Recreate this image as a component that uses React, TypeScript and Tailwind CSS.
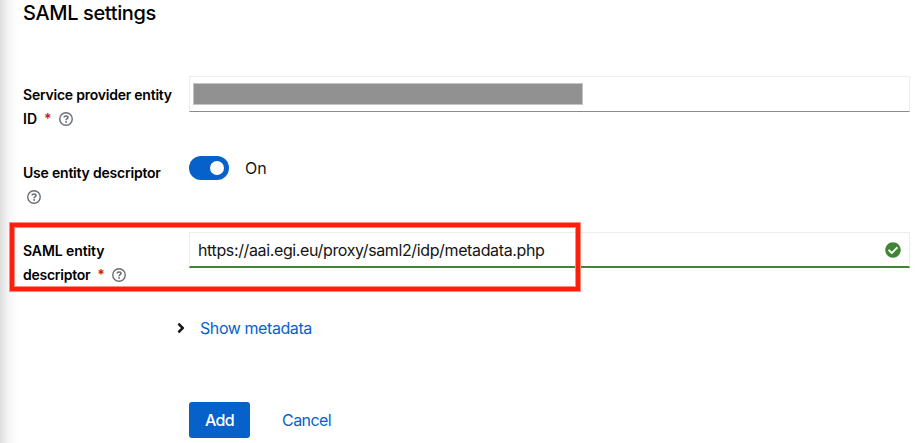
import type { ReactNode } from "react";
import { FaAngleRight, FaCheckCircle } from "react-icons/fa";

function Required() {
  return <span className="ml-[7px] w-[6px] text-[14px] text-[#c9190b]">*</span>;
}

function Help({ className }: { className: string }) {
  return (
    <button type="button" aria-label="Help" className={`text-[#6a6e73] ${className}`}>
      <svg width="14" height="14" viewBox="0 0 14 14" fill="none" stroke="currentColor" className="block">
        <circle cx="7" cy="7" r="6.25" strokeWidth="1.4" />
        <path d="M5 5.5C5.1 4.5 5.9 3.9 7 3.9C8.2 3.9 9 4.6 9 5.5C9 6.7 7.1 6.7 7.1 8.2" strokeWidth="1.5" />
        <circle cx="7.1" cy="9.9" r="0.95" fill="currentColor" stroke="none" />
      </svg>
    </button>
  );
}

function Row({ label, children }: { label: ReactNode; children: ReactNode }) {
  return (
    <div className="flex h-[78px] items-start">
      <div className="w-[166px] shrink-0 pt-[7px] text-[14px] leading-6 font-semibold whitespace-nowrap text-black">{label}</div>
      <div className="w-[721px] shrink-0">{children}</div>
    </div>
  );
}

export default function App() {
  return (
    <main className="relative flex h-[443px] w-[923px] overflow-hidden bg-white font-[Inter,sans-serif] text-[#151515]">
      <div className="w-[18px] shrink-0 bg-gradient-to-r from-[#dedede] via-[#f6f6f6] to-white" />
      <form className="w-[905px] shrink-0 pl-[5px]">
        <h1 className="h-[76px] text-[20px] leading-[26px] font-medium tracking-[-0.37px] text-black">SAML settings</h1>

        <Row
          label={
            <>
              <div className="tracking-[-0.23px]">Service provider entity</div>
              <div className="flex items-center">
                ID
                <Required />
                <Help className="ml-[9px]" />
              </div>
            </>
          }
        >
          <div className="h-9 border border-[#ededed] border-b-[#8a8d90] pt-[6px] pl-[3px]">
            <div className="h-[22px] w-[390px] border border-[#c4c4c4] bg-[#919191]" />
          </div>
        </Row>

        <Row
          label={
            <>
              <div className="tracking-[-0.21px]">Use entity descriptor</div>
              <div className="flex h-6 items-center">
                <Help className="ml-1" />
              </div>
            </>
          }
        >
          <div className="flex items-center pt-[2px]">
            <button type="button" aria-label="Use entity descriptor" className="flex h-6 w-10 items-center justify-end rounded-full bg-[#0662ca] pr-[5px]">
              <span className="size-[14px] rounded-full bg-white" />
            </button>
            <span className="ml-4 text-[16px] leading-6 tracking-[-0.1px]">On</span>
          </div>
        </Row>

        <Row
          label={
            <>
              <div className="tracking-[-0.1px]">SAML entity</div>
              <div className="flex items-center">
                <span className="tracking-[-0.25px]">descriptor</span>
                <Required />
                <Help className="ml-[9px]" />
              </div>
            </>
          }
        >
          <div className="flex h-9 items-center justify-between border border-b-2 border-[#ededed] border-b-[#3e8635] pr-[8px] pl-2">
            <span className="text-[16px] leading-6 tracking-[-0.37px]">https://aai.egi.eu/proxy/saml2/idp/metadata.php</span>
            <FaCheckCircle size={16} className="text-[#3e8635]" />
          </div>
        </Row>

        <div className="flex h-[36px] items-center pl-[150px]">
          <FaAngleRight size={16} />
          <span className="ml-[11px] text-[16px] leading-6 tracking-[-0.42px] text-[#0662ca]">Show metadata</span>
        </div>

        <div className="mt-[56px] flex items-center pl-[166px]">
          <button type="button" className="h-9 w-[61px] rounded-[3px] bg-[#0662ca] text-[16px] font-medium tracking-[-0.6px] text-white">Add</button>
          <button type="button" className="ml-8 text-[16px] tracking-[-0.55px] text-[#0662ca]">Cancel</button>
        </div>
      </form>
      <div className="pointer-events-none absolute top-[222px] left-[9px] h-[70px] w-[572px] border-[5px] border-[#fd1f0b] shadow-[inset_0_0_0_1px_#ff8a7e] outline-1 -outline-offset-1 outline-[#ff8a7e]" />
    </main>
  );
}
